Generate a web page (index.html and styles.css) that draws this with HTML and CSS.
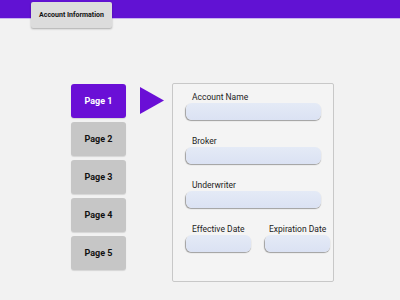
FILE: index.html
```html
<!DOCTYPE html>
<html lang="en">
<head>
    <meta charset="UTF-8">
    <title>Account Information</title>
    <link rel="stylesheet" href="styles.css">
</head>
<body>
    <div class="topbar">
        <div class="tab">Account Information</div>
    </div>
    <div class="main">
        <div class="pages">
            <button class="page active">Page 1</button>
            <button class="page">Page 2</button>
            <button class="page">Page 3</button>
            <button class="page">Page 4</button>
            <button class="page">Page 5</button>
        </div>
        <svg class="pointer" width="24" height="27" viewBox="0 0 24 27">
            <polygon points="0,0 24,13.5 0,27" fill="#6a0fd6"/>
        </svg>
        <div class="panel">
            <div class="field">
                <label>Account Name</label>
                <div class="input"></div>
            </div>
            <div class="field">
                <label>Broker</label>
                <div class="input"></div>
            </div>
            <div class="field">
                <label>Underwriter</label>
                <div class="input"></div>
            </div>
            <div class="dates">
                <div class="field">
                    <label>Effective Date</label>
                    <div class="input"></div>
                </div>
                <div class="field">
                    <label>Expiration Date</label>
                    <div class="input"></div>
                </div>
            </div>
        </div>
    </div>
</body>
</html>
```

FILE: styles.css
```css
body {
    margin: 0;
    background-color: #f2f2f2;
    font-family: Roboto, "Liberation Sans", sans-serif;
    color: #1c1c1c;
}

/* Header */
.topbar {
    height: 18px;
    background-color: #6112d3;
    border-bottom: 1px solid #c9b3ef;
    display: flex;
    padding-left: 31px;
}

.tab {
    margin-top: 2px;
    width: 81px;
    height: 26px;
    background-color: #dcdcdc;
    border-radius: 2px;
    box-shadow: 0px 1px 2px rgba(0, 0, 0, 0.3);
    font-size: 7px;
    font-weight: bold;
    color: #111;
    display: flex;
    align-items: center;
    justify-content: center;
    padding-bottom: 1px;
    box-sizing: border-box;
}

/* Body */
.main {
    display: flex;
    align-items: flex-start;
    padding-left: 71px;
    margin-top: 65px;
}

.pages {
    display: flex;
    flex-direction: column;
    gap: 4px;
}

.page {
    width: 55px;
    height: 34px;
    border: none;
    border-radius: 3px;
    background-color: #c6c6c6;
    box-shadow: 0px 1px 1px rgba(0, 0, 0, 0.12);
    font-family: Roboto, "Liberation Sans", sans-serif;
    font-size: 9px;
    font-weight: bold;
    color: #111;
    padding: 0;
}

.page.active {
    background-color: #6a0fd6;
    color: #fff;
}

.pointer {
    margin-left: 14px;
    margin-top: 3px;
}

.panel {
    margin-left: 8px;
    margin-top: -1px;
    width: 162px;
    height: 199px;
    box-sizing: border-box;
    border: 1.5px solid #c8c8c8;
    border-radius: 2px;
    background-color: #f4f4f4;
    padding: 8px 0 0 13px;
}

.field {
    display: flex;
    flex-direction: column;
    margin-bottom: 16px;
}

.field label {
    font-size: 8.5px;
    line-height: 11px;
    padding-left: 6px;
}

.input {
    width: 135px;
    height: 17px;
    border-radius: 6px;
    background: linear-gradient(#e4eaf6, #dbe2f3);
    box-shadow: -0.5px 1px 1px rgba(0, 0, 0, 0.35);
}

.dates {
    display: flex;
    gap: 14px;
    margin-top: 3px;
}

.dates .field:last-child label {
    padding-left: 4px;
}

.dates .input {
    width: 65px;
}
```
